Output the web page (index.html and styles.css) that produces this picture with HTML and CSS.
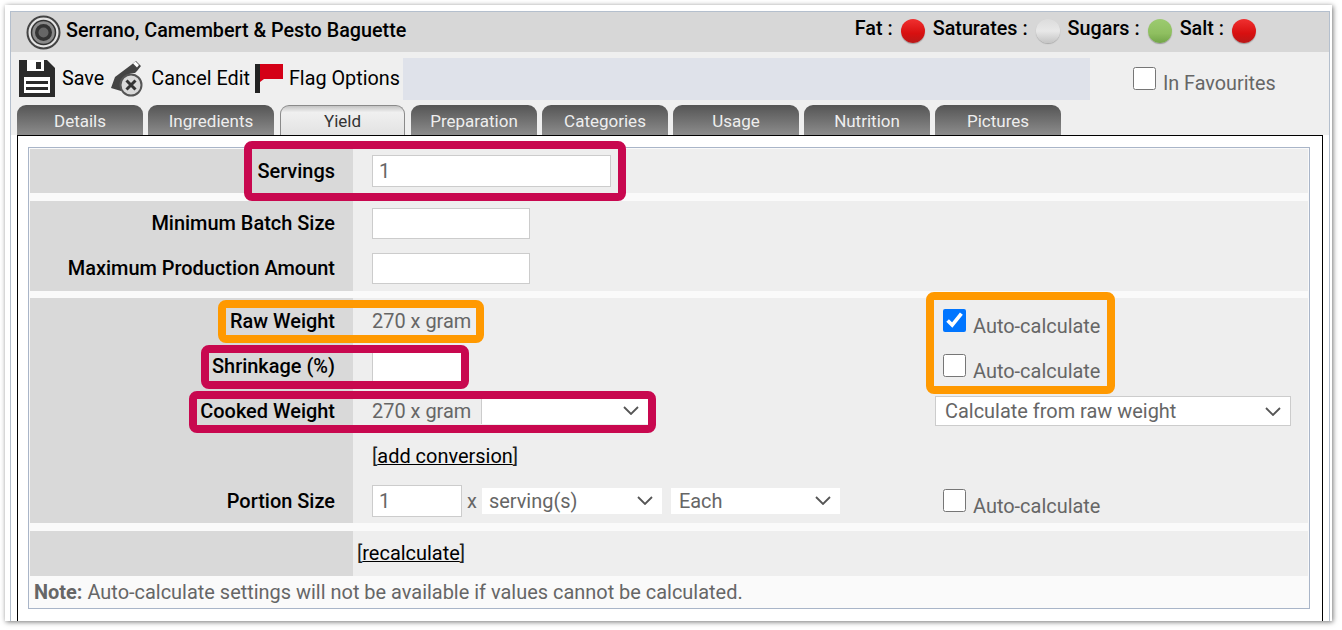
FILE: index.html
```html
<!DOCTYPE html>
<html lang="en">
<head>
<meta charset="utf-8">
<title>Serrano, Camembert &amp; Pesto Baguette</title>
<link rel="stylesheet" href="styles.css">
</head>
<body>
<div class="frame">
  <div class="panel">
    <header class="head">
      <svg class="logo" width="35" height="35" viewBox="0 0 35 35">
        <circle cx="17.5" cy="17.5" r="16" fill="#e4e4e4" stroke="#444" stroke-width="2"/>
        <circle cx="17.5" cy="17.5" r="12" fill="#8a8a8a" stroke="#333" stroke-width="1.5"/>
        <circle cx="17.5" cy="17.5" r="8.5" fill="#333"/>
        <circle cx="17.5" cy="17.5" r="5" fill="#666"/>
      </svg>
      <h1 class="title">Serrano, Camembert &amp; Pesto Baguette</h1>
      <div class="lights">
        <span>Fat :</span><i class="dot red"></i>
        <span>Saturates :</span><i class="dot grey"></i>
        <span>Sugars :</span><i class="dot green"></i>
        <span>Salt :</span><i class="dot red"></i>
      </div>
    </header>
    <div class="toolbar">
      <svg class="ico-save" width="36" height="37" viewBox="0 0 36 37">
        <path fill="#2b2b2b" d="M0 0H28L36 8V37H0Z"/>
        <rect x="8" y="0" width="17" height="11" fill="#fff"/>
        <rect x="17" y="2" width="5" height="7" fill="#2b2b2b"/>
        <rect x="5" y="17" width="26" height="16" fill="#fff"/>
        <rect x="7" y="21" width="22" height="3" fill="#2b2b2b"/>
        <rect x="7" y="27" width="22" height="3" fill="#2b2b2b"/>
      </svg>
      <span class="tool save">Save</span>
      <svg class="ico-cancel" width="32" height="37" viewBox="0 0 32 37">
        <path fill="#444" d="M0 28 L4 17 L20 5 L25 1 L30 6 L26 11 L24 13 A11 11 0 0 0 12 26 L10 31 Z"/>
        <path fill="#fff" d="M22 3.5 L24.500 1.500 L28 5 L26 7.500Z"/>
        <circle cx="20" cy="25" r="10.500" fill="#d9d9d9" stroke="#555" stroke-width="2"/>
        <path d="M15.500 20.500 L24.500 29.500 M24.500 20.500 L15.500 29.500" stroke="#333" stroke-width="3"/>
      </svg>
      <span class="tool cancel">Cancel Edit</span>
      <svg class="ico-flag" width="28" height="29" viewBox="0 0 28 29">
        <rect x="0" y="0" width="5" height="29" fill="#222"/>
        <path fill="#d40016" d="M5 0H28V15H9L5 18Z"/>
      </svg>
      <span class="tool flag">Flag Options</span>
      <div class="notice"></div>
      <label class="fav"><input type="checkbox"><span>In Favourites</span></label>
    </div>
    <nav class="tabs">
      <a class="tab">Details</a>
      <a class="tab">Ingredients</a>
      <a class="tab active">Yield</a>
      <a class="tab">Preparation</a>
      <a class="tab">Categories</a>
      <a class="tab">Usage</a>
      <a class="tab">Nutrition</a>
      <a class="tab">Pictures</a>
    </nav>
    <main class="content">
      <div class="sheet">
        <section class="sec gap8">
          <div class="row first">
            <div class="lbl">Servings</div>
            <div class="val"><input class="field w239" value="1"></div>
          </div>
        </section>
        <section class="sec gap7">
          <div class="row">
            <div class="lbl">Minimum Batch Size</div>
            <div class="val"><input class="field w158"></div>
          </div>
          <div class="row">
            <div class="lbl">Maximum Production Amount</div>
            <div class="val"><input class="field w158"></div>
          </div>
        </section>
        <section class="sec gap8">
          <div class="row">
            <div class="lbl">Raw Weight</div>
            <div class="val">270 x gram</div>
            <label class="aux auto"><input type="checkbox" checked><span>Auto-calculate</span></label>
          </div>
          <div class="row">
            <div class="lbl">Shrinkage (%)</div>
            <div class="val"><input class="field w90"></div>
            <label class="aux auto"><input type="checkbox"><span>Auto-calculate</span></label>
          </div>
          <div class="row">
            <div class="lbl">Cooked Weight</div>
            <div class="val">
              <span>270 x gram</span>
              <select class="pick cooked"><option></option></select>
            </div>
            <div class="aux"><select class="pick calc"><option>Calculate from raw weight</option></select></div>
          </div>
          <div class="row">
            <div class="lbl"></div>
            <div class="val"><span class="linkwrap">[<a class="link">add conversion</a>]</span></div>
          </div>
          <div class="row">
            <div class="lbl">Portion Size</div>
            <div class="val">
              <input class="field w90" value="1">
              <span class="times">x</span>
              <select class="pick serving"><option>serving(s)</option></select>
              <select class="pick each"><option>Each</option></select>
            </div>
            <label class="aux auto"><input type="checkbox"><span>Auto-calculate</span></label>
          </div>
        </section>
        <section class="sec">
          <div class="row">
            <div class="lbl"></div>
            <div class="val recalc"><span class="linkwrap">[<a class="link">recalculate</a>]</span></div>
          </div>
        </section>
        <p class="note"><b>Note:</b> Auto-calculate settings will not be available if values cannot be calculated.</p>
      </div>
    </main>
  </div>
  <div class="mark crimson m-servings"></div>
  <div class="mark orange m-raw"></div>
  <div class="mark crimson m-shrink"></div>
  <div class="mark crimson m-cooked"></div>
  <div class="mark orange m-auto"></div>
</div>
</body>
</html>
```
FILE: styles.css
```css
* { box-sizing: border-box; }
html, body { margin: 0; height: 630px; overflow: hidden; background: #fff; }
body { font: 19.95px/24px Roboto, "Liberation Sans", sans-serif; color: #000; }

.frame {
  position: relative;
  margin: 5px 0 0 5px;
  width: 1327px;
  height: 616px;
  background: #fff;
  padding: 6px 2px 0 5px;
  overflow: hidden;
}
body::after {
  content: "";
  position: absolute;
  left: 5px;
  top: 5px;
  width: 1327px;
  height: 616px;
  box-shadow: 1px 1px 5px rgba(0, 0, 0, .55);
  pointer-events: none;
}

.panel {
  height: 620px;
  border: 1px solid #b4bfcd;
  background: #fff;
}

.head {
  height: 40px;
  background: #d7d7d7;
  display: flex;
  align-items: center;
  padding: 0 73px 0 15px;
  font-size: 19.75px;
}
.logo { flex: none; margin-top: 1px; }
.title { margin: -2px 0 0 5px; font-size: inherit; font-weight: 500; }
.lights { margin-left: auto; display: flex; align-items: center; font-weight: 500; margin-top: -6px; }
.dot { width: 24px; height: 24px; border-radius: 50%; margin: 3px 8px 0 8px; display: block; }
.dot:last-child { margin-right: 0; }
.red { background: linear-gradient(#f03030, #d81010 60%, #b81818); box-shadow: 0 1px 1px #999; }
.grey { background: linear-gradient(#dcdcdc, #e8e8e8 50%, #c4c4c4); box-shadow: 0 1px 1px #aaa; }
.green { background: linear-gradient(#9ccb70, #8fbf60 60%, #72a548); box-shadow: 0 1px 1px #999; }

.toolbar {
  height: 53px;
  background: #efefef;
  display: flex;
  align-items: center;
  padding-left: 8px;
  font-size: 19.8px;
}
.ico-save { flex: none; }
.ico-cancel { flex: none; margin-left: 7px; }
.ico-flag { flex: none; margin-left: 5px; margin-top: -1px; }
.tool { margin-left: 7px; white-space: nowrap; }
.cancel { margin-left: 8px; }
.flag { margin-left: 6px; }
.notice { width: 687px; height: 42px; margin-left: 3px; background: #dfe2ea; flex: none; }
.fav { margin-left: 43px; display: flex; align-items: flex-start; color: #666; height: 42px; padding-top: 9px; }
.fav input { width: 23px; height: 23px; margin: 0 7px 0 0; }
.fav span { margin-top: 5px; }

.tabs {
  height: 30px;
  background: #efefef;
  display: flex;
  gap: 5px;
  padding-left: 6px;
}
.tab {
  width: 126px;
  height: 30px;
  border-radius: 9px 9px 0 0;
  background: linear-gradient(#555, #8c8c8c);
  color: #eee;
  font-size: 17px;
  display: flex;
  align-items: center;
  justify-content: center;
  padding-top: 2px;
}
.tab.active {
  width: 125px;
  margin: 0 1px;
  padding-top: 1px;
  background: linear-gradient(#c4c4c4, #f0f0f0 22%, #e2e2e2);
  border: 1px solid #8a8a8a;
  border-bottom: 0;
  color: #333;
}

.content {
  margin-left: 6px;
  width: 1306px;
  height: 500px;
  border: 1px solid #000;
  background: #fff;
  padding: 11px 0 0 10px;
}
.sheet {
  width: 1282px;
  border: 1px solid #a9b5c8;
  padding: 1px 1px 0;
  background: #fafafa;
}
.sec { background: #eee; }
.gap8 { margin-bottom: 8px; }
.gap7 { margin-bottom: 7px; }
.row {
  height: 45px;
  display: grid;
  grid-template-columns: 323px 582px 1fr;
  align-items: stretch;
}
.row.first { height: 44px; }
.gap7 .lbl { padding-bottom: 2px; }
.gap7 .field { height: 31px; }
.lbl {
  background: #d9d9d9;
  display: flex;
  align-items: center;
  justify-content: flex-end;
  padding-right: 18px;
  font-weight: 500;
}
.val {
  display: flex;
  align-items: center;
  padding-left: 19px;
  color: #666;
  white-space: nowrap;
}
.val.recalc { padding: 0 0 2px 4px; }
.aux { display: flex; align-items: center; color: #666; }
.auto { padding-left: 8px; }
.auto input { width: 23px; height: 23px; margin: 0 7px 0 0; flex: none; }
.auto span { margin-top: 11px; }

.field {
  height: 32px;
  border: 1px solid #ccc;
  background: #fff;
  padding: 0 6px;
  font: inherit;
  color: #666;
  outline: 0;
  flex: none;
  border-radius: 0;
}
.w239 { width: 239px; }
.w158 { width: 158px; }
.w90 { width: 90px; }

.pick {
  appearance: none;
  -webkit-appearance: none;
  height: 26px;
  border: 0;
  border-radius: 0;
  background: #fff url("data:image/svg+xml,%3Csvg xmlns='http://www.w3.org/2000/svg' width='16' height='9'%3E%3Cpath d='M1 1l7 7 7-7' fill='none' stroke='%23555' stroke-width='1.800'/%3E%3C/svg%3E") no-repeat right 9px center;
  font: inherit;
  color: #666;
  padding: 0 7px;
  flex: none;
}
.cooked { width: 167px; margin-left: 10px; border-left: 1px solid #ccc; }
.calc { width: 356px; height: 30px; border: 1px solid #ccc; padding: 0 9px; margin-top: 1px; }
.serving { width: 180px; }
.each { width: 169px; margin-left: 9px; padding: 0 8px; }
.times { margin: 0 5px 0 5px; }

.linkwrap { color: #222; }
.link { color: #000; text-decoration: underline; }

.note {
  margin: 0;
  height: 32px;
  display: flex;
  align-items: center;
  gap: 5px;
  padding-left: 4px;
  color: #666;
  background: #fafafa;
}

.mark { position: absolute; border-width: 8px; border-style: solid; border-radius: 8px; pointer-events: none; }
.crimson { border-color: #c8084f; }
.orange { border-color: #ff9900; }
.m-servings { left: 239px; top: 136px; width: 382px; height: 60px; }
.m-raw { left: 213px; top: 295px; width: 266px; height: 43px; }
.m-shrink { left: 196px; top: 340px; width: 268px; height: 44px; }
.m-cooked { left: 184px; top: 386px; width: 467px; height: 42px; }
.m-auto { left: 921px; top: 287px; width: 189px; height: 102px; }
```
